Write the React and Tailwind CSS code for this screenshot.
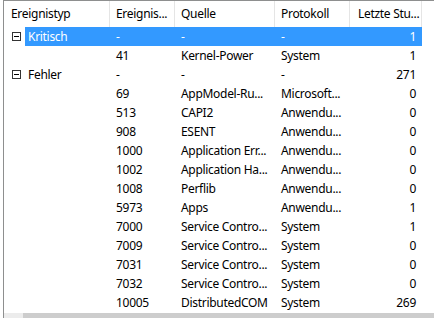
const rows = [
  { group: true, type: 'Kritisch', id: '-', src: '-', log: '-', count: '1', selected: true },
  { id: '41', src: 'Kernel-Power', log: 'System', count: '1' },
  { group: true, type: 'Fehler', id: '-', src: '-', log: '-', count: '271' },
  { id: '69', src: 'AppModel-Ru...', log: 'Microsoft...', count: '0' },
  { id: '513', src: 'CAPI2', log: 'Anwendu...', count: '0' },
  { id: '908', src: 'ESENT', log: 'Anwendu...', count: '0' },
  { id: '1000', src: 'Application Err...', log: 'Anwendu...', count: '0' },
  { id: '1002', src: 'Application Ha...', log: 'Anwendu...', count: '0' },
  { id: '1008', src: 'Perflib', log: 'Anwendu...', count: '0' },
  { id: '5973', src: 'Apps', log: 'Anwendu...', count: '1' },
  { id: '7000', src: 'Service Contro...', log: 'System', count: '1' },
  { id: '7009', src: 'Service Contro...', log: 'System', count: '0' },
  { id: '7031', src: 'Service Contro...', log: 'System', count: '0' },
  { id: '7032', src: 'Service Contro...', log: 'System', count: '0' },
  { id: '10005', src: 'DistributedCOM', log: 'System', count: '269' },
];

const MinusBox = () => (
  <svg width="9" height="9" viewBox="0 0 9 9" className="shrink-0">
    <rect x="0.5" y="0.5" width="8" height="8" fill="white" stroke="#333" />
    <line x1="2" y1="4.5" x2="7" y2="4.5" stroke="#000" />
  </svg>
);

const Row = ({ r }) => {
  const sel = r.selected;
  return (
    <div className="flex h-[19px] items-center whitespace-nowrap">
      <div className="flex w-[106px] h-full items-center">
        {r.group ? (
          <>
            <div className="pl-[8px] pr-[4px] flex items-center"><MinusBox /></div>
            <div className={`h-full flex items-center pl-[3px] ${sel ? 'bg-[#3399ff] text-white' : ''} flex-1`}>{r.type}</div>
          </>
        ) : null}
      </div>
      <div className={`flex h-full items-center ${sel ? 'bg-[#3399ff] text-white' : ''}`}>
        <div className="w-[65px] pl-[6px]">{r.id}</div>
        <div className="w-[100px] pl-[6px] overflow-hidden">{r.src}</div>
        <div className="w-[75px] pl-[6px]">{r.log}</div>
        <div className="w-[72px] pr-[6px] text-right">{r.count}</div>
      </div>
    </div>
  );
};

export default function App() {
  return (
    <div className="w-[434px] h-[318px] bg-white overflow-hidden text-[12px] tracking-[-0.3px] text-black" style={{ fontFamily: '"Noto Sans", sans-serif' }}>
      <div className="ml-[3px] h-full border-l border-t border-[#8e8f8f] flex flex-col">
        <div className="flex h-[26px] items-center whitespace-nowrap">
          <div className="w-[106px] h-full flex items-center pl-[7px] border-r border-[#e5e5e5]">Ereignistyp</div>
          <div className="w-[65px] h-full flex items-center pl-[6px] border-r border-[#e5e5e5]">Ereignis...</div>
          <div className="w-[100px] h-full flex items-center pl-[6px] border-r border-[#e5e5e5]">Quelle</div>
          <div className="w-[75px] h-full flex items-center pl-[6px] border-r border-[#e5e5e5]">Protokoll</div>
          <div className="w-[72px] h-full flex items-center pl-[8px] border-r border-[#e5e5e5]">Letzte Stu...</div>
        </div>
        <div className="flex-1">
          {rows.map((r, i) => <Row key={i} r={r} />)}
        </div>
        <div className="h-[5px] flex">
          <div className="w-[19px] bg-[#ececec]" />
          <div className="flex-1 bg-[#cdcdcd]" />
        </div>
      </div>
    </div>
  );
}
